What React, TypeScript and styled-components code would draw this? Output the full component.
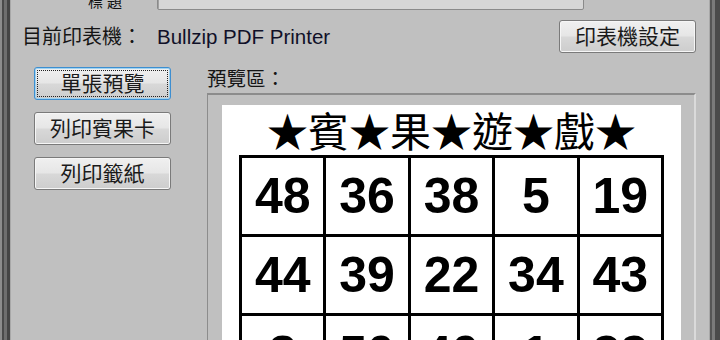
import React from "react";
import styled, { createGlobalStyle } from "styled-components";

const Global = createGlobalStyle`
  html, body { margin: 0; padding: 0; background: #c0c0c0; }
  body { width: 720px; height: 340px; overflow: hidden; }
`;

const CJK = `"Liberation Sans", "Noto Sans CJK TC", sans-serif`;

const Window = styled.div`
  display: flex;
  width: 720px;
  height: 340px;
  overflow: hidden;
  background: #c0c0c0;
`;

const LeftFrame = styled.div`
  width: 11px;
  flex: none;
  background: linear-gradient(
    to right,
    #8c8c8c 0 2px,
    #4a4a4a 2px 4px,
    #6e6e6e 4px 7px,
    #444 7px 10px,
    #a8a8a8 10px 11px
  );
`;

const RightFrame = styled.div`
  width: 11px;
  flex: none;
  background: linear-gradient(
    to right,
    #a8a8a8 0 1px,
    #555 1px 3px,
    #7a7a7a 3px 6px,
    #4a4a4a 6px 11px
  );
`;

const Content = styled.div`
  flex: 1;
  display: flex;
  flex-direction: column;
  padding: 0 13px 0 11px;
  min-width: 0;
`;

const TopRow = styled.div`
  display: flex;
  align-items: flex-end;
  height: 30px;
  margin-top: -20px;
`;

const TopLabel = styled.div`
  font-family: ${CJK};
  font-size: 15px;
  line-height: 18px;
  letter-spacing: 4px;
  color: #111;
  margin-left: 66px;
  width: 69px;
  margin-bottom: -1px;
  flex: none;
`;

const TextBox = styled.div`
  width: 427px;
  height: 28px;
  flex: none;
  box-sizing: border-box;
  border: 1px solid #8a8a8a;
  border-radius: 2px;
  background: #d6d6d6;
  box-shadow: inset 1px 1px 0 #a0a0a0;
  font-family: "Liberation Sans", sans-serif;
  font-size: 19px;
  line-height: 20px;
  padding: 0 8px;
  color: #10103a;
`;

const PrinterRow = styled.div`
  display: flex;
  align-items: center;
  margin-top: 10px;
  height: 33px;
`;

const Label = styled.div`
  font-family: ${CJK};
  font-size: 20px;
  line-height: 24px;
  color: #151515;
  white-space: nowrap;
`;

const PrinterName = styled.span`
  margin-left: 15px;
  font-size: 20.5px;
  color: #101028;
`;

const Spacer = styled.div`
  flex: 1;
`;

const Button = styled.button<{ $focused?: boolean }>`
  position: relative;
  width: 137px;
  height: 33px;
  flex: none;
  box-sizing: border-box;
  padding: 0;
  border: 1px solid ${(p) => (p.$focused ? "#3d8ed0" : "#7a7a7a")};
  border-radius: 3px;
  background: linear-gradient(
    to bottom,
    #f0f0f0 0%,
    #e6e6e6 48%,
    #d8d8d8 52%,
    #cdcdcd 100%
  );
  box-shadow: inset 0 0 0 1px ${(p) => (p.$focused ? "#9fd3f2" : "#f6f6f6")};
  font-family: ${CJK};
  font-size: 21px;
  line-height: 24px;
  color: #1a1a1a;
  text-align: center;
  cursor: default;
  &::after {
    content: "";
    display: ${(p) => (p.$focused ? "block" : "none")};
    position: absolute;
    inset: 2px;
    border: 1px dotted #222;
    border-radius: 1px;
  }
`;

const Body = styled.div`
  display: flex;
  margin-top: 14px;
  flex: 1;
  min-height: 0;
`;

const ButtonColumn = styled.div`
  display: flex;
  flex-direction: column;
  gap: 12px;
  margin-left: 12px;
  flex: none;
`;

const PreviewColumn = styled.div`
  display: flex;
  flex-direction: column;
  margin-left: 36px;
  flex: 1;
  min-height: 0;
`;

const PreviewLabel = styled(Label)`
  font-size: 19.5px;
  line-height: 23px;
  margin-top: 1px;
`;

const PreviewFrame = styled.div`
  margin-top: 2px;
  flex: 1;
  box-sizing: border-box;
  border-top: 2px solid #8c8c8c;
  border-left: 1px solid #8c8c8c;
  border-right: 2px solid #dadada;
  padding: 10px 13px 0 14px;
  display: flex;
  min-height: 0;
`;

const Paper = styled.div`
  flex: 1;
  background: #fff;
  display: flex;
  flex-direction: column;
  align-items: center;
`;

const Title = styled.div`
  font-family: "Noto Sans CJK TC", sans-serif;
  font-size: 41px;
  line-height: 48px;
  color: #000;
  white-space: nowrap;
`;

const Grid = styled.div`
  margin-top: 2px;
  display: grid;
  grid-template-columns: repeat(5, 1fr);
  grid-auto-rows: 76px;
  gap: 3px;
  padding: 3px;
  width: 425px;
  box-sizing: border-box;
  background: #000;
`;

const Cell = styled.div`
  background: #fff;
  display: flex;
  align-items: center;
  justify-content: center;
  font-family: "Liberation Sans", Arial, sans-serif;
  font-weight: bold;
  font-size: 50px;
  color: #000;
`;

const numbers = [48, 36, 38, 5, 19, 44, 39, 22, 34, 43, 8, 50, 40, 1, 33];

export default function App() {
  return (
    <>
      <Global />
      <Window>
        <LeftFrame />
        <Content>
          <TopRow>
            <TopLabel>標題</TopLabel>
            <TextBox>Arial</TextBox>
          </TopRow>
          <PrinterRow>
            <Label>
              目前印表機：<PrinterName>Bullzip PDF Printer</PrinterName>
            </Label>
            <Spacer />
            <Button>印表機設定</Button>
          </PrinterRow>
          <Body>
            <ButtonColumn>
              <Button $focused>單張預覽</Button>
              <Button>列印賓果卡</Button>
              <Button>列印籤紙</Button>
            </ButtonColumn>
            <PreviewColumn>
              <PreviewLabel>預覽區：</PreviewLabel>
              <PreviewFrame>
                <Paper>
                  <Title>★賓★果★遊★戲★</Title>
                  <Grid>
                    {numbers.map((n, i) => (
                      <Cell key={i}>{n}</Cell>
                    ))}
                  </Grid>
                </Paper>
              </PreviewFrame>
            </PreviewColumn>
          </Body>
        </Content>
        <RightFrame />
      </Window>
    </>
  );
}
